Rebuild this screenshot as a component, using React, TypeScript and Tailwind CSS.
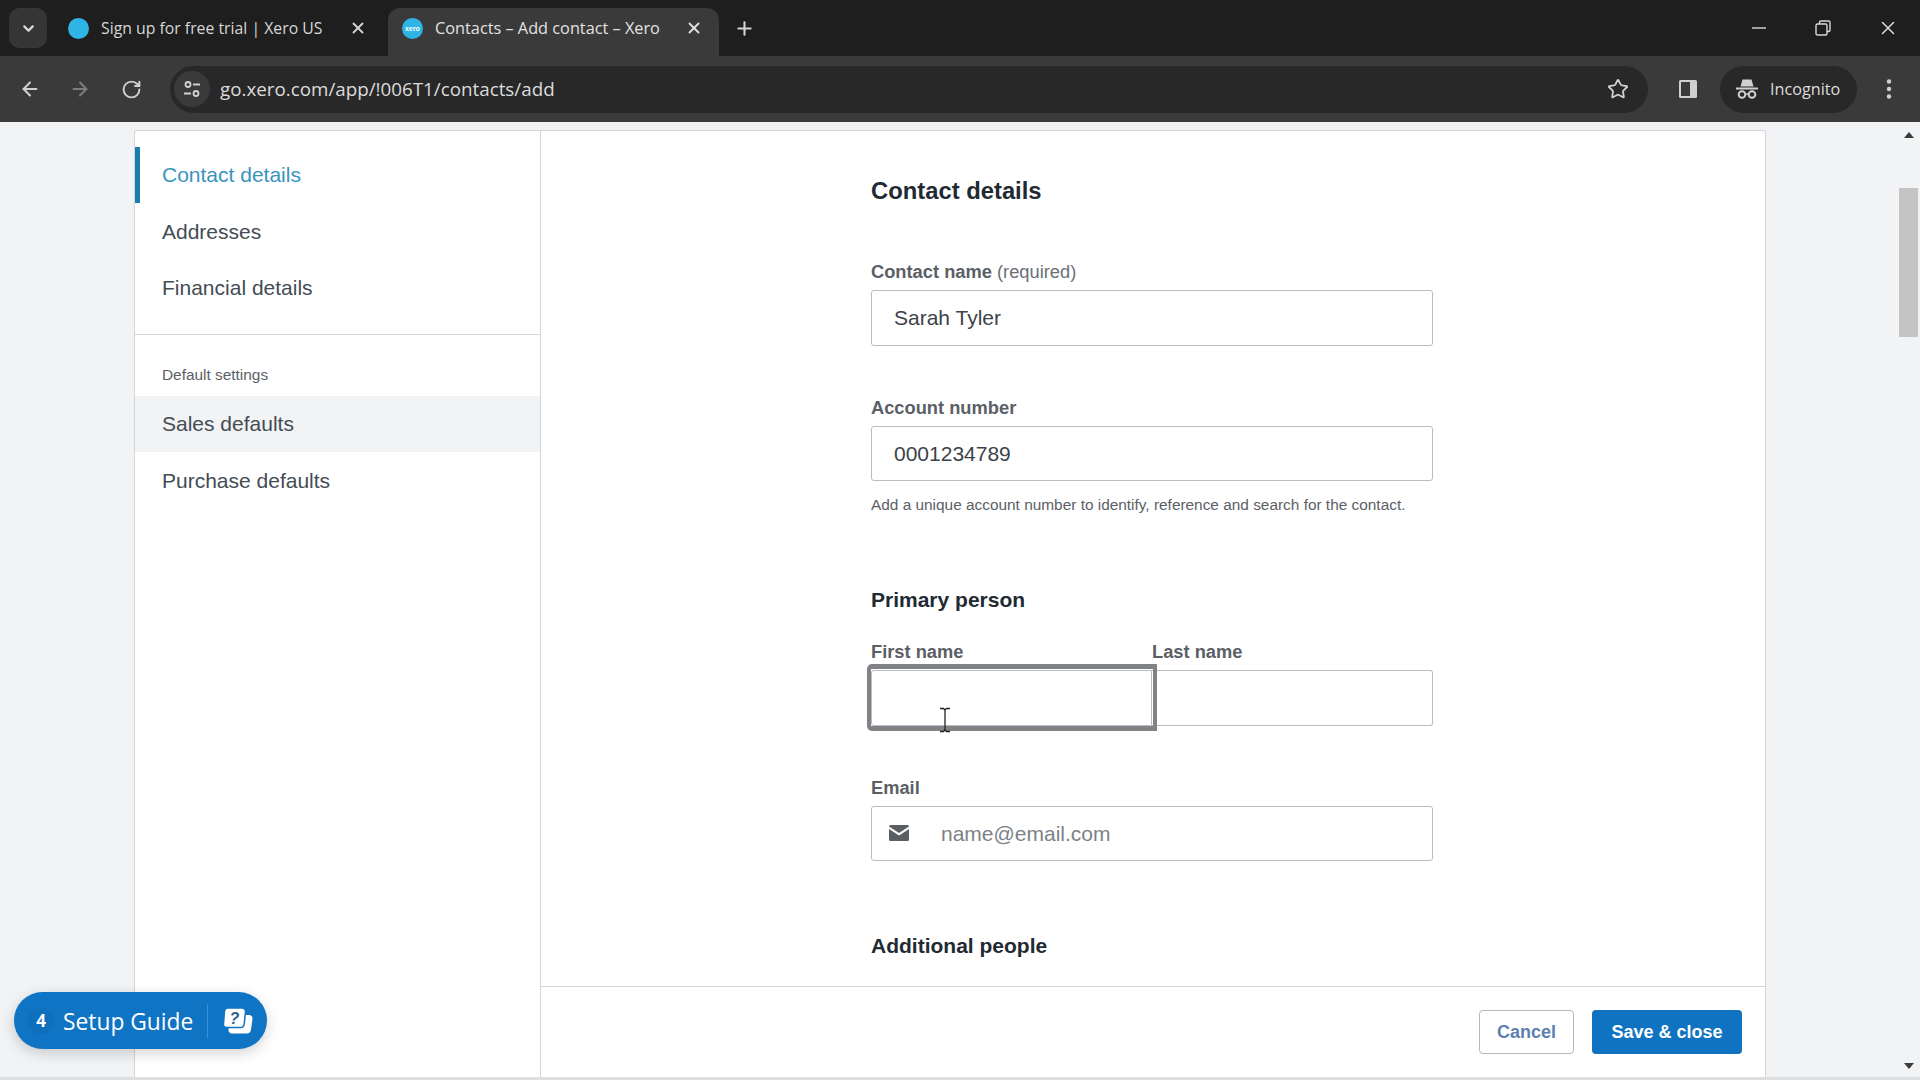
import React from "react";
import { ArrowLeft, ArrowRight, RotateCw, Star, X, Plus, ChevronDown } from "lucide-react";

const XeroDot = ({ text }: { text: boolean }) => (
  <span className="flex h-[21px] w-[21px] shrink-0 items-center justify-center rounded-full bg-[#2fb4e6] text-[7px] leading-none font-bold text-white [font-family:'Liberation_Sans',sans-serif]">
    {text ? "xero" : ""}
  </span>
);

const Label = ({ children, className = "" }: { children: React.ReactNode; className?: string }) => (
  <div className={`text-[18.3px] leading-[20px] font-bold text-[#5a6066] [font-family:'Liberation_Sans',sans-serif] ${className}`}>{children}</div>
);

const Heading = ({ children, className = "" }: { children: React.ReactNode; className?: string }) => (
  <h2 className={`text-[21px] leading-[26px] font-bold text-[#1f2a33] [font-family:'Liberation_Sans',sans-serif] ${className}`}>{children}</h2>
);

const Field = ({ value, className = "" }: { value?: string; className?: string }) => (
  <div className={`flex h-[55.5px] items-center rounded-[3px] border border-[#b9bcc0] bg-white px-[22px] text-[21px] text-[#3c4248] [font-family:'Liberation_Sans',sans-serif] ${className}`}>
    {value}
  </div>
);

const NavItem = ({ children, active, hover }: { children: React.ReactNode; active?: boolean; hover?: boolean }) => (
  <div
    className={`flex h-[56.3px] items-center text-[21px] [font-family:'Liberation_Sans',sans-serif] ${
      active ? "border-l-[5px] border-[#1a7fae] pl-[22px] text-[#3a94bd]" : "pl-[27px] text-[#444c54]"
    } ${hover ? "bg-[#f2f3f4]" : ""}`}
  >
    {children}
  </div>
);

export default function App() {
  return (
    <div className="relative flex h-[1080px] w-[1920px] flex-col overflow-hidden bg-[#f2f3f5]">
      {/* tab strip */}
      <div className="flex h-[56px] shrink-0 items-end bg-[#1e1e1e] pl-[9px] text-[#d6d6d6] [font-family:'Open_Sans',sans-serif]">
        <div className="mb-[8px] flex h-[40px] w-[38px] items-center justify-center rounded-[10px] bg-[#353535]">
          <ChevronDown size={17} strokeWidth={3} className="text-[#d8d8d8]" />
        </div>
        <div className="mb-[8px] flex h-[40px] w-[341px] items-center pl-[21px]">
          <XeroDot text={false} />
          <span className="ml-[12px] w-[249px] pt-[1px] text-[15.8px] whitespace-nowrap">Sign up for free trial | Xero US</span>
          <X size={18} strokeWidth={2.4} className="ml-[-1px]" />
        </div>
        <div className="flex h-[48px] w-[331px] items-center rounded-t-[12px] bg-[#3a3a3a] pb-[8px] pl-[14px] text-[#e2e2e2]">
          <XeroDot text />
          <span className="ml-[12px] w-[250px] pt-[1px] text-[16.3px] whitespace-nowrap">Contacts – Add contact – Xero</span>
          <X size={18} strokeWidth={2.4} />
        </div>
        <div className="mb-[8px] ml-[15px] flex h-[40px] items-center">
          <Plus size={21} strokeWidth={2.4} />
        </div>
        <div className="mb-[8px] ml-auto flex h-[40px] items-center text-[#d8d8d8]">
          <svg width="16" height="16" viewBox="0 0 16 16" className="mr-[48px]"><path d="M1 8h14" stroke="currentColor" strokeWidth="1.4" /></svg>
          <svg width="16" height="16" viewBox="0 0 16 16" className="mr-[46px]" fill="none" stroke="currentColor" strokeWidth="1.4"><rect x="1" y="4" width="11" height="11" rx="1.5" /><path d="M4.5 4V2.5A1.5 1.5 0 0 1 6 1h7.5A1.5 1.5 0 0 1 15 2.500V10a1.500 1.500 0 0 1-1.500 1.500H12" /></svg>
          <X size={22} strokeWidth={1.7} className="mr-[21px]" />
        </div>
      </div>

      {/* toolbar */}
      <div className="flex h-[66px] shrink-0 items-center bg-[#3a3a3a] text-[#d0d0d0]">
        <ArrowLeft size={22} strokeWidth={2.2} className="ml-[19px]" />
        <ArrowRight size={22} strokeWidth={2.2} className="ml-[28px] text-[#7d7d7d]" />
        <RotateCw size={21} strokeWidth={2.2} className="ml-[30px]" />
        <div className="ml-[28px] flex h-[47px] w-[1478px] items-center rounded-full bg-[#282828]">
          <span className="ml-[4px] flex h-[36px] w-[36px] items-center justify-center rounded-full bg-[#3a3a3a]">
            <svg width="20" height="20" viewBox="0 0 20 20" fill="none" stroke="currentColor" strokeWidth="1.800">
              <circle cx="6" cy="5.500" r="2.500" />
              <path d="M11 5.500h7M2 14.500h7" />
              <circle cx="14" cy="14.500" r="2.500" />
            </svg>
          </span>
          <span className="ml-[10px] text-[18.8px] whitespace-nowrap text-[#dcdcdc] [font-family:'Open_Sans',sans-serif]">go.xero.com/app/!006T1/contacts/add</span>
          <Star size={22} strokeWidth={2} className="mr-[19px] ml-auto" />
        </div>
        <svg width="20" height="20" viewBox="0 0 20 20" className="ml-[30px]">
          <rect x="1" y="1" width="18" height="18" rx="1.500" fill="#d0d0d0" />
          <rect x="3" y="3" width="9" height="14" fill="#3a3a3a" />
        </svg>
        <div className="ml-[22px] flex h-[47px] w-[137px] items-center rounded-full bg-[#282828]">
          <svg width="22" height="20" viewBox="0 0 22 20" fill="currentColor" className="ml-[16px]">
            <path d="M6.500 0.500h9l2 7h-13z" />
            <rect x="0" y="8.500" width="22" height="2" />
            <circle cx="6" cy="15.500" r="3.300" fill="none" stroke="currentColor" strokeWidth="2" />
            <circle cx="16" cy="15.500" r="3.300" fill="none" stroke="currentColor" strokeWidth="2" />
            <path d="M9.300 15h3.400" stroke="currentColor" strokeWidth="1.500" />
          </svg>
          <span className="ml-[12px] text-[16.2px] text-[#dcdcdc] [font-family:'Open_Sans',sans-serif]">Incognito</span>
        </div>
        <svg width="6" height="22" viewBox="0 0 6 22" fill="currentColor" className="ml-[29px]">
          <circle cx="3" cy="3.500" r="2.200" /><circle cx="3" cy="11" r="2.200" /><circle cx="3" cy="18.500" r="2.200" />
        </svg>
      </div>

      {/* page */}
      <div className="flex min-h-0 flex-1 flex-col">
        <div className="flex min-h-0 flex-1">
          <div className="ml-[134px] mt-[8px] flex w-[1632px] rounded-t-[3px] border border-b-0 border-[#d3d5d8] bg-white">
            {/* sidebar */}
            <aside className="w-[406px] shrink-0 border-r border-[#d3d5d8] pt-[16px]">
              <NavItem active>Contact details</NavItem>
              <NavItem>Addresses</NavItem>
              <NavItem>Financial details</NavItem>
              <div className="mt-[18px] border-t border-[#d6d8db]" />
              <div className="mt-[31px] mb-[12px] pl-[27px] text-[15.4px] leading-[18px] text-[#5b6168] [font-family:'Liberation_Sans',sans-serif]">Default settings</div>
              <NavItem hover>Sales defaults</NavItem>
              <NavItem>Purchase defaults</NavItem>
            </aside>

            {/* form */}
            <main className="flex min-w-0 flex-1 flex-col">
              <div className="min-h-0 flex-1 overflow-hidden pt-[47px] pl-[330px]">
                <div className="w-[562px]">
                  <Heading className="text-[23.8px]">Contact details</Heading>
                  <Label className="mt-[58px] mb-[8px]">
                    Contact name <span className="font-normal text-[#6a7076]">(required)</span>
                  </Label>
                  <Field value="Sarah Tyler" />
                  <Label className="mt-[52px] mb-[8px]">Account number</Label>
                  <Field value="0001234789" />
                  <p className="mt-[15px] text-[15.4px] leading-[18px] text-[#5b6168] [font-family:'Liberation_Sans',sans-serif]">
                    Add a unique account number to identify, reference and search for the contact.
                  </p>
                  <Heading className="mt-[73px]">Primary person</Heading>
                  <div className="mt-[29px] grid grid-cols-2">
                    <div>
                      <Label className="mb-[8px]">First name</Label>
                      <div className="relative z-10">
                        <Field className="rounded-r-none" />
                        <span className="pointer-events-none absolute -top-[6px] -right-[5px] -bottom-[5px] -left-[4px] rounded-l-[5px] border-x-[4px] border-y-[5px] border-[#808285]" />
                        <svg width="14" height="26" viewBox="0 0 14 26" className="absolute top-[37px] left-[67px]" fill="none" stroke="#222" strokeWidth="1.300">
                          <path d="M2 1.500h3.500L7 3l1.500-1.500H12M7 3v20M2 24.500h3.500L7 23l1.500 1.500H12" />
                        </svg>
                      </div>
                    </div>
                    <div>
                      <Label className="mb-[8px]">Last name</Label>
                      <Field className="rounded-l-none border-l-0" />
                    </div>
                  </div>
                  <Label className="mt-[52px] mb-[8px]">Email</Label>
                  <div className="flex h-[55.5px] items-center rounded-[3px] border border-[#b9bcc0] bg-white text-[21px] text-[#7c8187] [font-family:'Liberation_Sans',sans-serif]">
                    <svg width="20" height="16" viewBox="0 0 20 16" className="ml-[17px]">
                      <path d="M1.500 0h17A1.500 1.500 0 0 1 20 1.500L10 8 0 1.500A1.500 1.500 0 0 1 1.500 0zM0 4l10 6.500L20 4v10.500a1.500 1.500 0 0 1-1.500 1.500h-17A1.500 1.500 0 0 1 0 14.500z" fill="#5a5f64" />
                    </svg>
                    <span className="ml-[32px]">name@email.com</span>
                  </div>
                  <Heading className="mt-[72px]">Additional people</Heading>
                </div>
              </div>
              <div className="flex h-[91px] shrink-0 justify-end gap-[18px] border-t border-[#d3d5d8] pt-[23px] pr-[23px] [font-family:'Liberation_Sans',sans-serif]">
                <button className="h-[44px] w-[95px] rounded-[4px] border border-[#b5b8bc] bg-white text-[18px] font-bold text-[#5f7fb0]">Cancel</button>
                <button className="h-[44px] w-[150px] rounded-[4px] bg-[#0f73c2] text-[18px] font-bold text-white">Save &amp; close</button>
              </div>
            </main>
          </div>

          {/* scrollbar */}
          <div className="relative ml-auto w-[21px] shrink-0 pt-[66px] pl-[0px]">
            <div className="h-[149px] w-[19px] bg-[#c4c4c4]" />
            <span className="absolute top-[10px] left-[5px] h-0 w-0 border-x-[5px] border-b-[6px] border-x-transparent border-b-[#3c3c3c]" />
            <span className="absolute bottom-[8px] left-[5px] h-0 w-0 border-x-[5px] border-t-[6px] border-x-transparent border-t-[#3c3c3c]" />
          </div>
        </div>
        <div className="h-[3px] shrink-0 bg-[#dcdee0]" />
      </div>

      {/* setup guide */}
      <div className="absolute top-[992px] left-[14px] flex h-[57px] w-[253px] items-center rounded-full bg-[#0f74c4] text-white shadow-[0_4px_14px_rgba(0,0,0,0.18)] [font-family:'Open_Sans',sans-serif]">
        <span className="ml-[14px] flex h-[26px] w-[26px] items-center justify-center rounded-full bg-[#0e6fbd] text-[17px] font-bold">4</span>
        <span className="ml-[9px] pt-[3px] text-[22.8px] font-medium whitespace-nowrap">Setup Guide</span>
        <span className="ml-[14px] h-[34px] w-px bg-[#3a90d2]" />
        <svg width="30" height="28" viewBox="0 0 30 28" className="ml-[15px]">
          <path d="M10 8h16a3.500 3.500 0 0 1 3.500 4l-1.500 10.500a4.500 4.500 0 0 1-4.500 4H9a3.500 3.500 0 0 1-3.500-4L7 11a3.500 3.500 0 0 1 3-3z" fill="#fff" />
          <path d="M4.500 1h14.500a3.500 3.500 0 0 1 3.500 4l-1.300 12a3.800 3.800 0 0 1-3.800 3.500H3.500a3 3 0 0 1-3-3.500L1.500 4a3.500 3.500 0 0 1 3-3z" fill="#fff" stroke="#0f74c4" strokeWidth="1.500" />
          <text x="11.500" y="16.500" textAnchor="middle" fontSize="16" fontWeight="700" fontStyle="italic" fill="#2a5f8f" fontFamily="Liberation Sans, sans-serif">?</text>
        </svg>
      </div>
    </div>
  );
}
